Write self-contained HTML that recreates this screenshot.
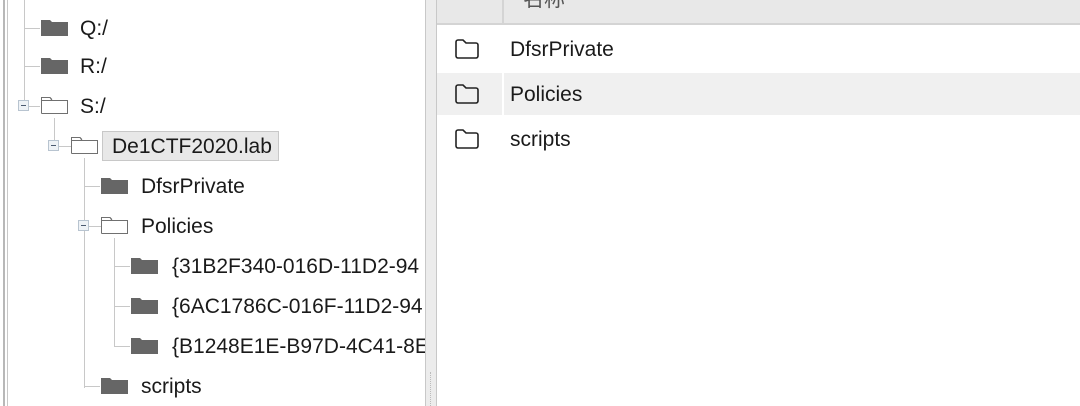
<!DOCTYPE html>
<html><head><meta charset="utf-8"><style>
*{margin:0;padding:0;box-sizing:border-box}
body{width:1080px;height:406px;overflow:hidden;background:#fff;position:relative;font-family:"Liberation Sans","Noto Sans CJK SC",sans-serif;font-size:21px;color:#1a1a1a}
.a{position:absolute}
.t{position:absolute;line-height:24px;white-space:nowrap}
.vl{position:absolute;width:1px;background:#c8c8c8}
.hl{position:absolute;height:1px;background:#c8c8c8}
.ff{position:absolute;width:27px;height:17px}
.exp{position:absolute;width:11px;height:11px;border:1px solid #b8c4d0;background:#eef2f6}
.exp:after{content:"";position:absolute;left:2px;top:4px;width:5px;height:1px;background:#4a5a70}
</style></head><body>
<div class="a" style="left:3px;top:0;width:2px;height:406px;background:#b8b8b8"></div>
<div class="a" style="left:7px;top:0;width:1px;height:406px;background:#c8c8c8"></div>

<div class="vl" style="left:24px;top:0;height:100px"></div>
<div class="hl" style="left:24px;top:28px;width:16px"></div>
<div class="hl" style="left:24px;top:66px;width:16px"></div>
<div class="hl" style="left:28px;top:106px;width:12px"></div>
<div class="vl" style="left:54px;top:118px;height:22px"></div>
<div class="hl" style="left:59px;top:146px;width:12px"></div>
<div class="vl" style="left:84px;top:158px;height:230px"></div>
<div class="hl" style="left:84px;top:186px;width:16px"></div>
<div class="hl" style="left:89px;top:226px;width:12px"></div>
<div class="hl" style="left:84px;top:386px;width:16px"></div>
<div class="vl" style="left:114px;top:238px;height:109px"></div>
<div class="hl" style="left:114px;top:266px;width:16px"></div>
<div class="hl" style="left:114px;top:306px;width:16px"></div>
<div class="hl" style="left:114px;top:346px;width:16px"></div>
<div class="exp" style="left:18px;top:100px"></div>
<div class="exp" style="left:48px;top:140px"></div>
<div class="exp" style="left:78px;top:220px"></div>

<svg width="0" height="0" style="position:absolute"><defs>
<symbol id="fd" viewBox="0 0 27 17"><path d="M0 1h9l2 2h16v14H0z" fill="#666"/></symbol>
<symbol id="fo" viewBox="0 0 27 17"><path d="M0.5 16.5V0.5h8.5l2 2h0M0.5 16.5h26V3.5H0.5" fill="none" stroke="#707070"/><path d="M0.5 0.5h8.5l2 3" fill="none" stroke="#707070"/></symbol>
</defs></svg>
<svg class="ff" style="left:41px;top:19px"><use href="#fd"/></svg>
<svg class="ff" style="left:41px;top:57px"><use href="#fd"/></svg>
<svg class="ff" style="left:41px;top:97px"><use href="#fo"/></svg>
<svg class="ff" style="left:71px;top:137px"><use href="#fo"/></svg>
<svg class="ff" style="left:101px;top:177px"><use href="#fd"/></svg>
<svg class="ff" style="left:101px;top:217px"><use href="#fo"/></svg>
<svg class="ff" style="left:131px;top:257px"><use href="#fd"/></svg>
<svg class="ff" style="left:131px;top:297px"><use href="#fd"/></svg>
<svg class="ff" style="left:131px;top:337px"><use href="#fd"/></svg>
<svg class="ff" style="left:101px;top:377px"><use href="#fd"/></svg>

<div class="t" style="left:80px;top:17px">Q:/</div>
<div class="t" style="left:80px;top:55px">R:/</div>
<div class="t" style="left:80px;top:95px">S:/</div>
<div class="a" style="left:102px;top:131px;width:177px;height:30px;background:#e8e8e8;border:1px solid #c8c8c8"></div>
<div class="t" style="left:112px;top:135px">De1CTF2020.lab</div>
<div class="t" style="left:141px;top:175px">DfsrPrivate</div>
<div class="t" style="left:141px;top:215px">Policies</div>
<div class="t" style="left:172px;top:255px">{31B2F340-016D-11D2-94</div>
<div class="t" style="left:172px;top:295px">{6AC1786C-016F-11D2-94</div>
<div class="t" style="left:172px;top:335px">{B1248E1E-B97D-4C41-8E</div>
<div class="t" style="left:141px;top:375px">scripts</div>

<div class="a" style="left:425px;top:0;width:12px;height:406px;background:#ececec;border-left:1px solid #c8c8c8;border-right:1px solid #c8c8c8"></div>
<div class="a" style="left:430px;top:372px;width:1px;height:34px;border-left:1px dotted #bbb"></div>

<div class="a" style="left:437px;top:0;width:643px;height:25px;background:#e8e8e8;border-bottom:2px solid #d4d4d4"></div>
<div class="a" style="left:502px;top:0;width:2px;height:25px;background:#d4d4d4"></div>
<div class="t" style="left:523px;top:-12px;color:#555">名称</div>
<div class="a" style="left:437px;top:73px;width:643px;height:42px;background:#f0f0f0"></div>
<div class="a" style="left:502px;top:73px;width:2px;height:42px;background:#fff"></div>
<svg class="a" style="left:454px;top:38px" width="26" height="22"><path d="M2 4a2 2 0 0 1 2-2h5l3 3h10a2 2 0 0 1 2 2v11a2 2 0 0 1-2 2H4a2 2 0 0 1-2-2z" fill="none" stroke="#222" stroke-width="1.6"/></svg>
<svg class="a" style="left:454px;top:83px" width="26" height="22"><path d="M2 4a2 2 0 0 1 2-2h5l3 3h10a2 2 0 0 1 2 2v11a2 2 0 0 1-2 2H4a2 2 0 0 1-2-2z" fill="none" stroke="#222" stroke-width="1.6"/></svg>
<svg class="a" style="left:454px;top:128px" width="26" height="22"><path d="M2 4a2 2 0 0 1 2-2h5l3 3h10a2 2 0 0 1 2 2v11a2 2 0 0 1-2 2H4a2 2 0 0 1-2-2z" fill="none" stroke="#222" stroke-width="1.6"/></svg>
<div class="t" style="left:510px;top:38px">DfsrPrivate</div>
<div class="t" style="left:510px;top:83px">Policies</div>
<div class="t" style="left:510px;top:128px">scripts</div>
</body></html>
